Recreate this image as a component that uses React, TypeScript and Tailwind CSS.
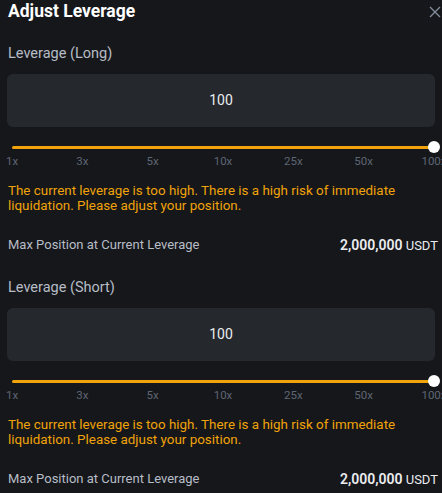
import React from "react";

const ticks = ["1x", "3x", "5x", "10x", "25x", "50x", "100x"];

function Section({ title }: { title: string }) {
  return (
    <div className="px-[7px]">
      <div className="text-[14.5px] leading-[20px] text-[#b7bdc6] pl-[1px]">{title}</div>
      <div className="mt-[10px] h-[53px] rounded-md bg-[#25282d] flex items-center justify-center text-[14px] text-[#eaecef]">
        100
      </div>
      <div className="mt-[13px] ml-[5px] w-[422px]">
        <div className="relative h-[14px] flex items-center">
          <div className="h-[3px] w-full rounded-full bg-[#f0a30a]" />
          <div className="absolute right-[-6px] top-[1px] w-[12px] h-[12px] rounded-full bg-white" />
        </div>
        <div className="flex justify-between h-[14px]">
          {ticks.map((t) => (
            <div key={t} className="w-0 flex justify-center">
              <span className="text-[11.5px] leading-[14px] text-[#5e6673] whitespace-nowrap">{t}</span>
            </div>
          ))}
        </div>
      </div>
      <div className="mt-[15px] pl-[1px] text-[13.4px] leading-[15px] text-[#f0a30a]">
        The current leverage is too high. There is a high risk of immediate liquidation. Please adjust your position.
      </div>
      <div className="mt-[24px] flex justify-between items-center h-[16px] pl-[1px] -mr-[3px]">
        <span className="text-[13px] text-[#b7bdc6]">Max Position at Current Leverage</span>
        <span className="text-[13px] text-[#eaecef]">
          <span className="font-semibold text-[14px]">2,000,000</span> USDT
        </span>
      </div>
    </div>
  );
}

export default function App() {
  return (
    <div className="w-[442px] h-[493px] overflow-hidden bg-[#16171b] font-['Roboto',sans-serif]">
      <div className="h-[23px] flex items-center justify-between pl-[8px] pr-[1px]">
        <span className="text-[17.5px] font-bold text-white leading-[23px]">Adjust Leverage</span>
        <svg width="12" height="12" viewBox="0 0 12 12" className="text-[#848e9c]">
          <path d="M1 1L11 11M11 1L1 11" stroke="currentColor" strokeWidth="1.3" />
        </svg>
      </div>
      <div className="mt-[21px]">
        <Section title="Leverage (Long)" />
      </div>
      <div className="mt-[25px]">
        <Section title="Leverage (Short)" />
      </div>
    </div>
  );
}
